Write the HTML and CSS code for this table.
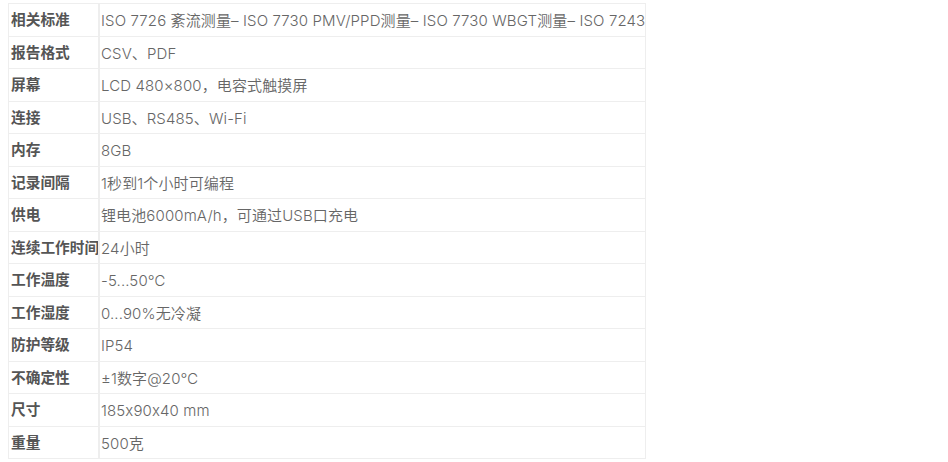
FILE: index.html
```html
<!DOCTYPE html>
<html lang="zh-CN">
<head>
    <meta charset="UTF-8">
    <meta name="viewport" content="width=device-width, initial-scale=1.0">
    <title>技术参数</title>
    <link rel="stylesheet" href="styles.css">
</head>
<body>
    <div class="spec-wrap">
        <table class="spec-table">
            <tr><th>相关标准</th><td>ISO 7726 紊流测量– ISO 7730 PMV/PPD测量– ISO 7730 WBGT测量– ISO 7243</td></tr>
            <tr><th>报告格式</th><td>CSV、PDF</td></tr>
            <tr><th>屏幕</th><td>LCD 480×800，电容式触摸屏</td></tr>
            <tr><th>连接</th><td>USB、RS485、Wi-Fi</td></tr>
            <tr><th>内存</th><td>8GB</td></tr>
            <tr><th>记录间隔</th><td>1秒到1个小时可编程</td></tr>
            <tr><th>供电</th><td>锂电池6000mA/h，可通过USB口充电</td></tr>
            <tr><th>连续工作时间</th><td>24小时</td></tr>
            <tr><th>工作温度</th><td>-5...50℃</td></tr>
            <tr><th>工作湿度</th><td>0...90%无冷凝</td></tr>
            <tr><th>防护等级</th><td>IP54</td></tr>
            <tr><th>不确定性</th><td>±1数字@20℃</td></tr>
            <tr><th>尺寸</th><td>185x90x40 mm</td></tr>
            <tr><th>重量</th><td>500克</td></tr>
        </table>
    </div>
</body>
</html>
```

FILE: styles.css
```css
body {
    margin: 0 8px;
    background: #fff;
    font-family: Inter, "Noto Sans CJK SC", sans-serif;
    font-feature-settings: "calt" 0;
    font-size: 15px;
    color: #666;
}

.spec-wrap {
    padding-top: 3px;
}

.spec-table {
    border-collapse: collapse;
    table-layout: fixed;
    width: 638px;
}

.spec-table th,
.spec-table td {
    border: 1px solid #eeeeee;
    padding: 6px 0 4px 2px;
    line-height: 21.5px;
    white-space: nowrap;
    overflow: hidden;
    text-align: left;
    vertical-align: middle;
}

/* label column */
.spec-table th {
    width: 87px;
    font-size: 14.7px;
    font-weight: bold;
    color: #555;
    border-right: 2px solid #eeeeee;
}

.spec-table td {
    padding-left: 1px;
    letter-spacing: 0.12px;
    font-weight: 350;
}
```
